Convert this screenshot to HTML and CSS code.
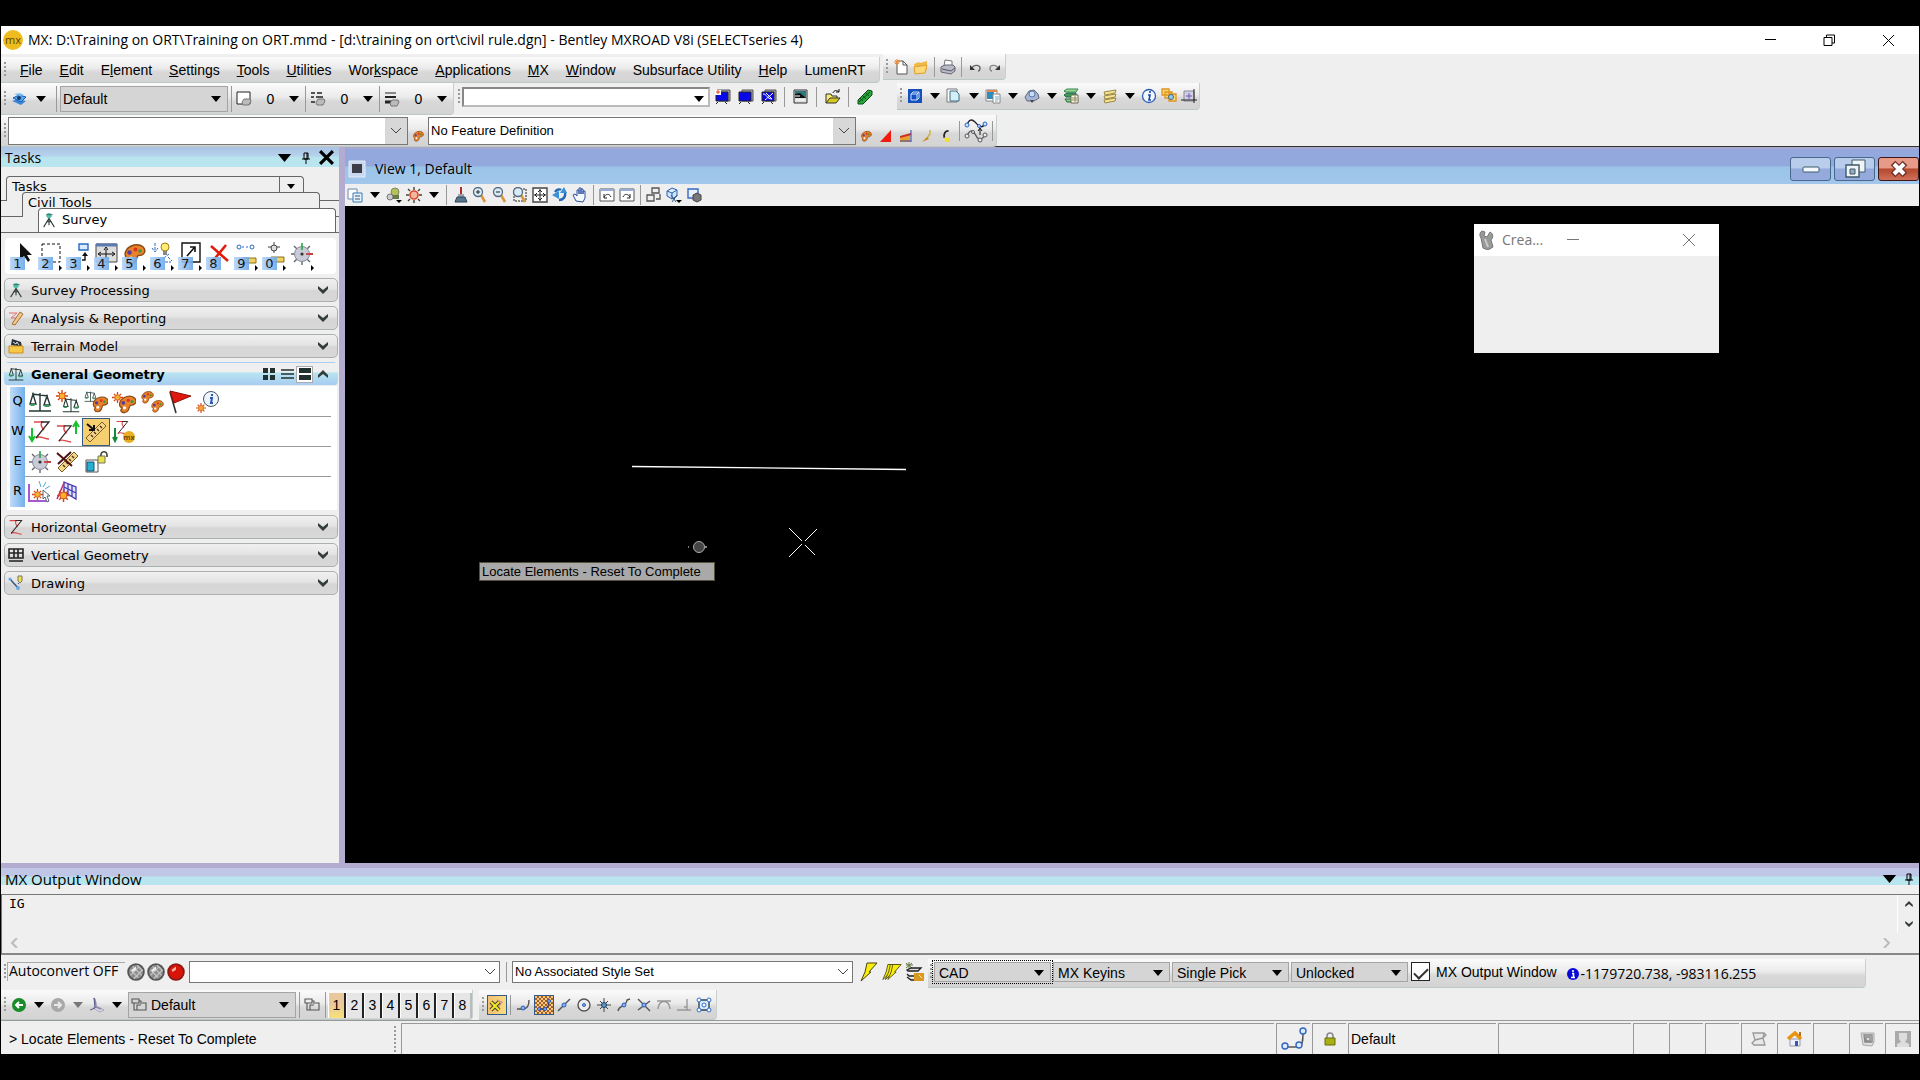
FILE: index.html
```html
<!doctype html>
<html lang="en">
    <head>
        <title>Bentley MXROAD V8i</title>
        <meta charset="UTF-8">
        <meta name="viewport" content="width=device-width, initial-scale=1">
        <link rel="stylesheet" href="styles.css">
    </head>
    <body>

    <!-- shared icons -->
    <svg class="sprite">
        <symbol id="caret" viewBox="0 0 10 6"><path d="M0 0h10L5 6z" fill="currentColor"/></symbol>
        <symbol id="chevron" viewBox="0 0 10 8"><path d="M0 0l5 4 5-4v3L5 8 0 3z" fill="currentColor"/></symbol>
        <symbol id="pin" viewBox="0 0 8 12"><path d="M2 1h4v6H2zM0 7h8M4 7v5M5 1v6" fill="none" stroke="#000"/></symbol>
        <symbol id="palette" viewBox="0 0 16 16"><path d="M8 2c5-1 8 2 7 5-1 2-3 2-4 2s-1 2-2 4-5 3-6 0l1-2C1 10 1 4 8 2z" fill="#e8822a" stroke="#8a4a16"/><circle cx="5" cy="7" r="1.5" fill="#5a3a9a"/><circle cx="9" cy="5" r="1.3" fill="#e03020"/><circle cx="12" cy="6" r="1.2" fill="#3a9a3a"/><circle cx="6" cy="11" r="1.3" fill="#fff"/></symbol>
        <symbol id="scale" viewBox="0 0 24 24"><path d="M1 21h22M12 3v18M4 4l16 2M5 4L2 14h6zM19 6l-3 9h6z" fill="none" stroke="#243a36" stroke-width="1.4"/><path d="M1 14h7l-2 2H3zM15 15h8l-2 2h-4z" fill="#3e9a5c"/></symbol>
        <symbol id="sun" viewBox="0 0 12 12"><path d="M6 0v12M0 6h12M2 2l8 8M10 2l-8 8" stroke="#d04818" stroke-width="1.4"/><circle cx="6" cy="6" r="3" fill="#f8b030" stroke="#e06020"/></symbol>
        <symbol id="zig" viewBox="0 0 18 20"><path d="M1 2h8c-2 4 0 5 2 8M3 18c4-3 8 1 13 1" stroke="#e04848" fill="none" stroke-width="1.5"/><path d="M8 2h8L3 18" fill="none" stroke="#3a2828" stroke-width="1.3"/></symbol>
        <symbol id="ruler" viewBox="0 0 24 24"><path d="M2 18L18 2l4 4L6 22z" fill="#f2d888" stroke="#7a5a1c"/><path d="M7 15l2 2M10 12l2 2M13 9l2 2M16 6l2 2" stroke="#5a2a1a" stroke-width="1.4"/></symbol>
        <symbol id="compass" viewBox="0 0 24 24"><path d="M4 4l16 16M20 4L4 20M1 12h22M12 12v11" stroke="#666" stroke-width="1.4"/><circle cx="12" cy="12" r="7.5" fill="#c9cbd6" stroke="#888ca0"/><path d="M12 1v7" stroke="#2aa84a" stroke-width="1.6"/><path d="M16 12h7" stroke="#c83030" stroke-width="1.6"/><circle cx="12" cy="12" r="1.6" fill="#333"/></symbol>
        <symbol id="tripod" viewBox="0 0 16 18"><circle cx="8" cy="4" r="3" fill="#4cc0a8"/><path d="M5 3h7" stroke="#466"/><path d="M8 7L2 17M8 7l6 10M8 7v8M5 11h6" fill="none" stroke="#2c3a3a" stroke-width="1.2"/></symbol>
        <symbol id="models" viewBox="0 0 16 16"><path d="M1 2h7v4H1zM3 6v7h3M8 4h2v3M11 6h4v7H6V8h4" fill="none" stroke="#555" stroke-width="1.1"/></symbol>
        <symbol id="layers" viewBox="0 0 16 16"><path d="M1 10l6-2 8 2-5 4z" fill="#3a86d8"/><path d="M2 7l6-3 7 2-5 5z" fill="#5aa8ec" stroke="#1a5cb8"/><path d="M3 3l6-1 4 2-4 1z" fill="#78c0f4"/><circle cx="8" cy="7" r="2" fill="#123a6a"/></symbol>
        <symbol id="ball" viewBox="0 0 16 16"><circle cx="8" cy="8" r="7" fill="#8c8c8c" stroke="#555" stroke-width="1.6"/><path d="M3 6l7 7M5 3l8 8M9 2l5 5M3 11L11 3M6 14l8-8" stroke="#c6c6c6"/><path d="M4 6l4-3v3l-3 2z" fill="#eee"/></symbol>
        <symbol id="monitor" viewBox="0 0 16 16"><path d="M4 1h11v11H4z" fill="#aaa" stroke="#555"/><path d="M1 3h12v9H1z" fill="#0808e8" stroke="#222"/><path d="M1 15l2-2M12 15l-2-2" stroke="#222" fill="none"/></symbol>
        <symbol id="lens" viewBox="0 0 16 16"><path d="M9 8l4 7" stroke="#d89840" stroke-width="2.6"/><circle cx="6" cy="5" r="4.5" fill="#d8ecf8" stroke="#556a80" stroke-width="1.3"/></symbol>
        <symbol id="pageview" viewBox="0 0 16 14"><path d="M1 1h14v12H1z" fill="#fff" stroke="#555"/><path d="M1 2h14" stroke="#98b0d8" stroke-width="2"/></symbol>
        <symbol id="bolt" viewBox="0 0 18 20"><path d="M7 1h10L9 10l2 0L1 19 5 10z" fill="#f8ec10" stroke="#4a4408"/></symbol>
    </svg>

    <div class="app">

        <header class="titlebar">
            <svg class="logo" viewBox="0 0 22 22"><circle cx="11" cy="11" r="10" fill="#eebc1c"/><text x="11" y="15" text-anchor="middle" class="logo-text">mx</text></svg>
            <h1>MX: D:\Training on ORT\Training on ORT.mmd - [d:\training on ort\civil rule.dgn] - Bentley MXROAD V8i (SELECTseries 4)</h1>
            <div class="winbuttons">
                <button type="button" aria-label="Minimize"><svg viewBox="0 0 12 12"><path d="M1 5.5h11" stroke="#000"/></svg></button>
                <button type="button" aria-label="Restore"><svg viewBox="0 0 12 12"><path d="M1 3.5h8v8H1zM3.5 3V1h8v8H9" fill="none" stroke="#000"/></svg></button>
                <button type="button" aria-label="Close"><svg viewBox="0 0 12 12"><path d="M1 1l11 11M12 1L1 12" stroke="#000"/></svg></button>
            </div>
        </header>

        <div class="row menu-row">
            <nav class="bar menu">
                <i class="grip"></i>
                <a href="#"><u>F</u>ile</a>
                <a href="#"><u>E</u>dit</a>
                <a href="#">E<u>l</u>ement</a>
                <a href="#"><u>S</u>ettings</a>
                <a href="#"><u>T</u>ools</a>
                <a href="#"><u>U</u>tilities</a>
                <a href="#">Wor<u>k</u>space</a>
                <a href="#"><u>A</u>pplications</a>
                <a href="#"><u>M</u>X</a>
                <a href="#"><u>W</u>indow</a>
                <a href="#">Subsurface Utility</a>
                <a href="#"><u>H</u>elp</a>
                <a href="#">LumenRT</a>
            </nav>
            <div class="bar filebar">
                <i class="grip"></i>
                <button class="tool" type="button" aria-label="New"><svg viewBox="0 0 16 16"><path d="M4 2h6l4 4v9H4z" fill="#fff" stroke="#555"/><path d="M10 2v4h4" fill="none" stroke="#555"/><path d="M4 0v6M1 3h6M2 1l4 4M6 1L2 5" stroke="#f08a30"/></svg></button>
                <button class="tool" type="button" aria-label="Open"><svg viewBox="0 0 16 16"><path d="M1 5l5-2 1 1 7-2v9L2 15z" fill="#f2b848"/><path d="M1 8l13-2-2 8-10 1z" fill="#fbd878" stroke="#e0a030"/></svg></button>
                <i class="sep"></i>
                <button class="tool" type="button" aria-label="Print"><svg viewBox="0 0 16 16"><path d="M5 1l7 1v5H4z" fill="#fff" stroke="#777"/><path d="M1 8l4-2h8l2 2v4l-4 3-10-2z" fill="#b9bcc6" stroke="#667"/><path d="M2 10l9 2 4-3" fill="none" stroke="#556"/></svg></button>
                <i class="sep"></i>
                <button class="tool" type="button" aria-label="Undo"><svg viewBox="0 0 16 16"><path d="M5 9c2-4 8-3 8 0 0 2-1 3-2 3" fill="none" stroke="#666" stroke-width="1.4"/><path d="M3 6v5h5z" fill="#333"/></svg></button>
                <button class="tool" type="button" aria-label="Redo"><svg viewBox="0 0 16 16"><path d="M11 9C9 5 3 6 3 9c0 2 1 3 2 3" fill="none" stroke="#888" stroke-width="1.4"/><path d="M13 6v5H8z" fill="#333"/></svg></button>
            </div>
        </div>

        <div class="row tools-row">
            <div class="bar attributes">
                <i class="grip"></i>
                <button class="tool" type="button" aria-label="Template"><svg><use href="#layers"/></svg></button>
                <button class="drop wide" type="button" aria-label="Template list"><svg><use href="#caret"/></svg></button>
                <i class="sep"></i>
                <span class="select level"><select aria-label="Level"><option>Default</option></select><svg><use href="#caret"/></svg></span>
                <i class="sep"></i>
                <button class="attr" type="button"><svg class="ico" viewBox="0 0 16 16"><path d="M1 1h13v12H1z" fill="#fff" stroke="#222"/><path d="M6 11l2-3h6l1 2-2 4H7z" fill="#bbb" stroke="#777"/></svg><span>0</span><svg class="arrow"><use href="#caret"/></svg></button>
                <i class="sep"></i>
                <button class="attr" type="button"><svg class="ico" viewBox="0 0 16 16"><path d="M1 2h4M7 2h5M1 6h3M6 6h7M1 11h4" stroke="#222" stroke-width="1.4"/><path d="M6 12l2-4h6l1 2-2 4H7z" fill="#bbb" stroke="#777"/></svg><span>0</span><svg class="arrow"><use href="#caret"/></svg></button>
                <i class="sep"></i>
                <button class="attr" type="button"><svg class="ico" viewBox="0 0 16 16"><path d="M1 2h11" stroke="#222"/><path d="M1 6h11" stroke="#222" stroke-width="2"/><path d="M1 11h8" stroke="#222" stroke-width="3"/><path d="M6 12l2-3h6l1 2-2 4H7z" fill="#bbb" stroke="#777"/></svg><span>0</span><svg class="arrow"><use href="#caret"/></svg></button>
            </div>
            <div class="keyin">
                <i class="grip"></i>
                <span class="select keyin-box"><select aria-label="Key-in"><option></option></select><svg><use href="#caret"/></svg></span>
                <button class="tool mid" type="button" aria-label="Display set"><svg viewBox="0 0 16 16"><use href="#monitor"/><path d="M0 1h6v5H0z" fill="#fff"/><path d="M3 0v5M1 3h4" stroke="#e04020"/></svg></button>
                <button class="tool mid" type="button" aria-label="Display"><svg viewBox="0 0 16 16"><use href="#monitor"/></svg></button>
                <button class="tool mid" type="button" aria-label="Display wireframe"><svg viewBox="0 0 16 16"><use href="#monitor"/><path d="M2 5c4 0 4 5 9 5M4 11c2-2 5-4 8-7M5 4l6 6" stroke="#fff" fill="none"/></svg></button>
                <i class="sep"></i>
                <button class="tool mid" type="button" aria-label="Image"><svg viewBox="0 0 16 16"><path d="M1 1h13v13H1z" fill="#ddd" stroke="#333"/><path d="M2 2h11v7H2z" fill="#2c7a80"/><path d="M2 5l5-1 6 5H2z" fill="#111"/><path d="M2 7h5M3 11h9" stroke="#fff"/></svg></button>
                <i class="sep"></i>
                <button class="tool mid" type="button" aria-label="Open project"><svg viewBox="0 0 16 16"><path d="M1 14V5h5l1 2h5v2" fill="#f6ec70" stroke="#333"/><path d="M1 14l4-5h10l-4 5z" fill="#d8c820" stroke="#333"/><path d="M8 4c1-3 4-3 6-1M14 0v3h-3" fill="none" stroke="#111"/></svg></button>
                <i class="sep"></i>
                <button class="tool mid" type="button" aria-label="Road"><svg viewBox="0 0 16 16"><path d="M1 11L11 1l4 1v4L6 15H1z" fill="#28a83c" stroke="#0c4a18"/><path d="M3 9l3 3M6 7l3 3M9 4l3 3M2 13L13 3" stroke="#0c4a18"/></svg></button>
            </div>
            <div class="bar primary">
                <i class="grip"></i>
                <button class="tool" type="button" aria-label="Models"><svg viewBox="0 0 16 16"><path d="M1 1h14v14H1z" fill="#1450c0"/><path d="M4 6h6v6H4zM4 6l2-2h6v6l-2 2M10 6l2-2" fill="none" stroke="#cfe4ff"/></svg></button>
                <button class="drop" type="button" aria-label="More models"><svg><use href="#caret"/></svg></button>
                <button class="tool" type="button" aria-label="References"><svg viewBox="0 0 16 16"><path d="M1 1h10v13H1z" fill="#fff" stroke="#777"/><path d="M4 3h6l3 3v7H4z" fill="#d4f0f6" stroke="#3a6a86"/></svg></button>
                <button class="drop" type="button" aria-label="More references"><svg><use href="#caret"/></svg></button>
                <button class="tool" type="button" aria-label="Raster manager"><svg viewBox="0 0 16 16"><path d="M1 2h11v11H1z" fill="#fff" stroke="#888"/><path d="M2 4h7v7H2z" fill="#2c8cc0"/><path d="M2 3h10" stroke="#e08850" stroke-width="2"/><path d="M8 6h7v9H8z" fill="#fff" stroke="#888"/><path d="M10 9h4M10 11h4M10 13h3" stroke="#7ab"/></svg></button>
                <button class="drop" type="button" aria-label="More raster"><svg><use href="#caret"/></svg></button>
                <button class="tool" type="button" aria-label="Point clouds"><svg viewBox="0 0 16 16"><path d="M1 9l4-6 5-1 4 4 1 4-5 3H3z" fill="#a8b4d4" stroke="#667"/><circle cx="8" cy="6" r="3" fill="#c8dcf4" stroke="#57a"/><path d="M6 12h4l-2 3z" fill="#445"/></svg></button>
                <button class="drop" type="button" aria-label="More point clouds"><svg><use href="#caret"/></svg></button>
                <button class="tool" type="button" aria-label="Level manager"><svg viewBox="0 0 16 16"><path d="M1 3l3-2h11l-2 3H2z" fill="#9ad890" stroke="#385"/><path d="M1 7l3-2h9v4H3z" fill="#3a9a58" stroke="#264"/><path d="M2 11h8v3H4z" fill="#8cd080" stroke="#264"/><path d="M8 7h7v8H8z" fill="#fff8e0" stroke="#665"/><path d="M9 10h5M9 12h5M12 8v6" stroke="#886"/></svg></button>
                <button class="drop" type="button" aria-label="More levels"><svg><use href="#caret"/></svg></button>
                <button class="tool" type="button" aria-label="Level display"><svg viewBox="0 0 16 16"><path d="M2 4l12-2-1 3-10 2zM2 8l12-2-1 3-10 2zM2 12l12-2-1 3-10 2z" fill="#f6e490" stroke="#998848"/></svg></button>
                <button class="drop" type="button" aria-label="More level display"><svg><use href="#caret"/></svg></button>
                <button class="tool" type="button" aria-label="Element information"><svg viewBox="0 0 16 16"><circle cx="8" cy="8" r="6.5" fill="#f4f8ff" stroke="#2c5cb8" stroke-width="1.3"/><path d="M9 3v2M7 7h2l-1 5h2" fill="none" stroke="#1a48a8" stroke-width="1.6"/></svg></button>
                <button class="tool" type="button" aria-label="Project explorer"><svg viewBox="0 0 16 16"><path d="M1 1h7v6H1zM4 4h7v6H4zM8 6h7v7H8z" fill="#fcd870" stroke="#e09420" stroke-width="1.3"/><circle cx="10" cy="9" r="2.5" fill="#8cd0f0" stroke="#468"/></svg></button>
                <button class="tool" type="button" aria-label="AccuDraw"><svg viewBox="0 0 16 16"><path d="M3 3h10v10H3z" fill="#d0d0e4" stroke="#889"/><path d="M0 12h16" stroke="#222"/><path d="M13 1v14" stroke="#222"/><path d="M8 5v6M5 8h6" stroke="#7a50b0"/></svg></button>
            </div>
        </div>

        <div class="row feature-row">
            <div class="bar feature">
                <i class="grip"></i>
                <span class="select combo long"><select aria-label="Feature"><option></option></select><svg viewBox="0 0 10 6"><path d="M0 0l5 5 5-5" fill="none" stroke="#444"/></svg></span>
                <button class="tool low" type="button" aria-label="Feature palette"><svg><use href="#palette"/></svg></button>
                <span class="select combo longer"><select aria-label="Feature definition"><option>No Feature Definition</option></select><svg viewBox="0 0 10 6"><path d="M0 0l5 5 5-5" fill="none" stroke="#444"/></svg></span>
                <button class="tool low" type="button" aria-label="Definition palette"><svg><use href="#palette"/></svg></button>
                <button class="tool low" type="button" aria-label="Slope"><svg viewBox="0 0 12 12"><path d="M0 12L11 0v12z" fill="#f01c10"/></svg></button>
                <button class="tool low" type="button" aria-label="Profile"><svg viewBox="0 0 12 12"><path d="M0 8l10-4v8H0z" fill="#e8a030"/><path d="M0 7l11-3" stroke="#d03020" stroke-width="2"/><path d="M11 0v12M0 11h11" stroke="#3048a8"/></svg></button>
                <button class="tool low" type="button" aria-label="Brush"><svg viewBox="0 0 12 12"><path d="M10 0v4L7 8" fill="none" stroke="#c8b040" stroke-width="1.4"/><path d="M7 7l2 2-7 3z" fill="#c88a1c"/></svg></button>
                <button class="tool low" type="button" aria-label="Curve"><svg viewBox="0 0 12 14"><path d="M9 1C5 1 3 4 4 9" fill="none" stroke="#222" stroke-width="2"/><path d="M4 9h6v5H5z" fill="#f0e030"/></svg></button>
                <i class="sep"></i>
                <button class="tool big" type="button" aria-label="Splines"><svg viewBox="0 0 24 24"><path d="M3 6C5 0 8 0 11 3s6 8 10 2" fill="none" stroke="#223" stroke-width="1.4"/><path d="M3 17c3-7 6-6 8-2s5 9 10 1" fill="none" stroke="#556" stroke-width="1.4"/><path d="M16 10v6M14 12l2-3 2 3" stroke="#111" fill="none"/><g fill="#cfe2ff" stroke="#2c62c0"><circle cx="3" cy="6" r="2"/><circle cx="15" cy="7" r="1.5"/><circle cx="21" cy="5" r="2"/></g><g fill="#eee" stroke="#555"><circle cx="3" cy="17" r="2"/><circle cx="9" cy="13" r="1.5"/><circle cx="16" cy="21" r="2"/><circle cx="21" cy="16" r="2"/></g></svg></button>
                <i class="sep"></i>
            </div>
        </div>

        <main class="main">

            <aside class="tasks">
                <div class="dock-head">
                    <h2>Tasks</h2>
                    <button type="button" aria-label="Panel menu"><svg class="menu-caret"><use href="#caret"/></svg></button>
                    <button type="button" aria-label="Pin"><svg class="pin"><use href="#pin"/></svg></button>
                    <button type="button" aria-label="Close panel"><svg class="close" viewBox="0 0 14 14"><path d="M1 1l12 12M13 1L1 13" stroke="#000" stroke-width="3"/></svg></button>
                </div>

                <div class="tab-row"><a class="tab first" href="#">Tasks<span><svg><use href="#caret"/></svg></span></a></div>
                <div class="tab-row"><a class="tab second" href="#">Civil Tools</a></div>
                <div class="tab-row"><a class="tab third" href="#"><svg><use href="#tripod"/></svg>Survey</a></div>

                <div class="main-tasks">
                    <button type="button"><svg viewBox="0 0 24 24"><path d="M10 1v17l4-4 4 6 2-2-3-5h5z" fill="#111"/></svg><b>1</b></button>
                    <button class="more" type="button"><svg viewBox="0 0 24 24"><path d="M4 2h18v18H4z" fill="none" stroke="#111" stroke-dasharray="3 2"/></svg><b>2</b></button>
                    <button class="more" type="button"><svg viewBox="0 0 24 24"><path d="M13 2h9v6h-9z" fill="#d8ecff" stroke="#2a6ac0" stroke-width="1.4"/><path d="M16 18h3v-5" fill="none" stroke="#111" stroke-width="1.4"/><path d="M16 14l3-4 3 4z" fill="#111"/></svg><b>3</b></button>
                    <button class="more" type="button"><svg viewBox="0 0 24 24"><path d="M2 2h21v18H2z" fill="#ddd" stroke="#444"/><path d="M2 3h21" stroke="#5a7ab0" stroke-width="3"/><path d="M12 7v10M5 12h15M10 8l2-3 2 3M7 10l-3 2 3 2M18 10l3 2-3 2" fill="none" stroke="#111"/></svg><b>4</b></button>
                    <button class="more" type="button"><svg viewBox="0 0 16 16"><use href="#palette"/></svg><b>5</b></button>
                    <button class="more" type="button"><svg viewBox="0 0 24 24"><path d="M5 1v8M2 6l3 4 3-4M14 16l5-4M15 20h6M18 15l4 4" fill="none" stroke="#2a6ac0" stroke-dasharray="3 1"/><circle cx="15" cy="5" r="4" fill="#ffec70" stroke="#a08020"/><path d="M13 9h4v4h-4z" fill="#888"/></svg><b>6</b></button>
                    <button class="more" type="button"><svg viewBox="0 0 24 24"><path d="M4 1h18v19H4z" fill="#fff" stroke="#111" stroke-width="1.4"/><path d="M9 14l7-8M12 5h5v5" fill="none" stroke="#111" stroke-width="1.6"/></svg><b>7</b></button>
                    <button type="button"><svg viewBox="0 0 24 24"><path d="M5 4l17 15M20 3L6 20" stroke="#e01c10" stroke-width="2.6"/></svg><b>8</b></button>
                    <button class="more" type="button"><svg viewBox="0 0 24 24"><path d="M4 5h14" stroke="#2a6ac0" stroke-dasharray="2 2"/><circle cx="5" cy="5" r="2" fill="#fff" stroke="#2a6ac0"/><circle cx="18" cy="5" r="2" fill="#fff" stroke="#2a6ac0"/><path d="M9 16h13v5H9z" fill="#f0d060" stroke="#887020"/></svg><b>9</b></button>
                    <button class="more" type="button"><svg viewBox="0 0 24 24"><path d="M12 0v11M6 5h12" stroke="#444"/><circle cx="12" cy="6" r="3" fill="#ddd" stroke="#444"/><path d="M9 15h13v5H9z" fill="#f0d060" stroke="#887020"/></svg><b>0</b></button>
                    <button class="more" type="button" aria-label="Compass"><svg><use href="#compass"/></svg></button>
                </div>

                <div class="sections">
                    <button class="section" type="button"><svg><use href="#tripod"/></svg><span>Survey Processing</span><svg class="chev"><use href="#chevron"/></svg></button>
                    <button class="section" type="button"><svg viewBox="0 0 16 16"><path d="M1 3h8l-6 5h8L6 15" fill="none" stroke="#e07068"/><path d="M4 14L12 2l3 2L7 15z" fill="#f4c88c" stroke="#a07038"/></svg><span>Analysis &amp; Reporting</span><svg class="chev"><use href="#chevron"/></svg></button>
                    <button class="section" type="button"><svg viewBox="0 0 16 16"><path d="M3 7l1-6 9 3 1 5z" fill="#26303a"/><path d="M5 4l3 2 1-2 2 3" stroke="#ddd" fill="none"/><path d="M1 8h14v7H1z" fill="#f8c848" stroke="#c89020"/></svg><span>Terrain Model</span><svg class="chev"><use href="#chevron"/></svg></button>

                    <div class="section open">
                        <svg viewBox="0 0 24 24"><use href="#scale"/></svg><span>General Geometry</span>
                        <button type="button" aria-label="Icons"><svg viewBox="0 0 14 14"><path d="M1 1h5v5H1zM8 1h5v5H8zM1 8h5v5H1zM8 8h5v5H8z" fill="#22302e"/></svg></button>
                        <button type="button" aria-label="List"><svg viewBox="0 0 14 14"><path d="M1 3h13M1 7h13M1 11h13" stroke="#22302e" stroke-width="1.6"/></svg></button>
                        <button class="on" type="button" aria-label="Panel"><svg viewBox="0 0 14 14"><path d="M1 1h12v5H1zM1 8h12v5H1z" fill="#22302e"/></svg></button>
                        <svg class="chev up"><use href="#chevron"/></svg>
                    </div>

                    <div class="toolgrid">
                        <div class="toolline"><kbd>Q</kbd>
                            <button type="button" aria-label="Reports"><svg><use href="#scale"/></svg></button>
                            <button type="button" aria-label="Set feature"><svg viewBox="0 0 24 24"><use href="#sun" width="12" height="12"/><use href="#scale" x="6" y="6" width="18" height="18"/></svg></button>
                            <button type="button" aria-label="Match feature"><svg viewBox="0 0 24 24"><use href="#scale" width="13" height="13"/><use href="#palette" x="7" y="5" width="18" height="18"/></svg></button>
                            <button type="button" aria-label="Set active"><svg viewBox="0 0 24 24"><use href="#palette" x="5" y="4" width="20" height="20"/><use href="#sun" y="2" width="11" height="11"/></svg></button>
                            <button type="button" aria-label="Copy feature"><svg viewBox="0 0 24 24"><use href="#palette" width="14" height="14"/><use href="#palette" x="10" y="9" width="14" height="14"/></svg></button>
                            <button type="button" aria-label="Flag"><svg viewBox="0 0 24 24"><path d="M2 2l6 21" stroke="#333" stroke-width="1.6"/><path d="M2 1l21 5-17 7z" fill="#e01810" stroke="#8c1008"/></svg></button>
                            <button type="button" aria-label="Feature info"><svg viewBox="0 0 24 24"><circle cx="15" cy="9" r="7.5" fill="#eef4ff" stroke="#456"/><path d="M16 4v2M14 8h2l-1 5h2" fill="none" stroke="#2a58b0" stroke-width="2"/><use href="#sun" y="13" width="10" height="10"/></svg></button>
                        </div>
                        <div class="toolline"><kbd>W</kbd>
                            <button type="button" aria-label="Import geometry"><svg viewBox="0 0 24 24"><use href="#zig" x="5" width="18" height="20"/><path d="M4 8v12M1 16l3 5 3-5" fill="none" stroke="#18c030" stroke-width="2"/></svg></button>
                            <button type="button" aria-label="Export geometry"><svg viewBox="0 0 24 24"><use href="#zig" y="4" width="17" height="19"/><path d="M20 14V3M17 7l3-5 3 5" fill="none" stroke="#18c030" stroke-width="2"/></svg></button>
                            <button class="on" type="button" aria-label="Active rules"><svg viewBox="0 0 24 24"><use href="#ruler"/><path d="M3 4l6 5M5 10h5V5" fill="none" stroke="#111" stroke-width="2"/></svg></button>
                            <button type="button" aria-label="Import MX"><svg viewBox="0 0 24 24"><use href="#zig" x="3" width="15" height="15"/><path d="M3 8v12M1 17l2 4 2-4" fill="none" stroke="#188838" stroke-width="2"/><circle cx="17" cy="17" r="6" fill="#e8b020"/><text x="17" y="20" text-anchor="middle" class="mini">mx</text></svg></button>
                        </div>
                        <div class="toolline"><kbd>E</kbd>
                            <button type="button" aria-label="Civil AccuDraw"><svg><use href="#compass"/></svg></button>
                            <button type="button" aria-label="Deactivate rule"><svg viewBox="0 0 24 24"><use href="#ruler"/><path d="M1 3l15 13M15 2L2 14" stroke="#501010" stroke-width="2"/></svg></button>
                            <button type="button" aria-label="Unlock"><svg viewBox="0 0 24 24"><path d="M2 10h12v12H2z" fill="#fff" stroke="#555"/><path d="M3 12h7v9H3z" fill="#28b0d0" stroke="#157"/><path d="M14 6h7v7h-7z" fill="#e8e048" stroke="#776"/><path d="M17 6c-1-5 6-6 6-1v2" fill="none" stroke="#443" stroke-width="1.6"/></svg></button>
                        </div>
                        <div class="toolline"><kbd>R</kbd>
                            <button type="button" aria-label="Create template"><svg viewBox="0 0 24 24"><path d="M1 4v17h20" fill="none" stroke="#a858d0" stroke-width="2"/><use href="#sun" x="4" y="9" width="11" height="11"/><path d="M11 1l2 6M18 2l-3 5M22 6l-5 3" stroke="#58a8e0"/><path d="M15 10v9l2-2 2 5 2-1-2-5h3z" fill="#fff" stroke="#567"/></svg></button>
                            <button type="button" aria-label="Grid"><svg viewBox="0 0 24 24"><path d="M8 2l12 5v12L8 12zM12 4v11M16 5v12M8 7l12 6" fill="#dce4ff" stroke="#4838b0" stroke-width="1.3"/><path d="M1 19L8 3" stroke="#c02878" stroke-width="1.6"/><use href="#sun" x="1" y="9" width="13" height="13"/></svg></button>
                        </div>
                    </div>

                    <button class="section" type="button"><svg viewBox="0 0 18 20"><use href="#zig"/></svg><span>Horizontal Geometry</span><svg class="chev"><use href="#chevron"/></svg></button>
                    <button class="section" type="button"><svg viewBox="0 0 16 16"><path d="M1 2h14v9H1zM1 6h14M6 2v9M10 2v9M1 14h14" fill="none" stroke="#222" stroke-width="1.6"/></svg><span>Vertical Geometry</span><svg class="chev"><use href="#chevron"/></svg></button>
                    <button class="section" type="button"><svg viewBox="0 0 16 16"><path d="M2 4l8 9" stroke="#357" stroke-width="1.4"/><circle cx="2" cy="4" r="1.6" fill="#6ae"/><circle cx="10" cy="13" r="2" fill="#6ae"/><path d="M10 9l3-3" stroke="#357"/><path d="M10 1h4v5l-2 2-2-2z" fill="#f0e048" stroke="#776"/></svg><span>Drawing</span><svg class="chev"><use href="#chevron"/></svg></button>
                </div>
            </aside>

            <section class="view">
                <div class="view-head">
                    <svg class="view-icon" viewBox="0 0 18 18"><path d="M1 1h16v16H1z" fill="#c8d8f0" stroke="#e4ecf8"/><path d="M4 4h10v9H4z" fill="#3c3c48"/></svg>
                    <h2>View 1, Default</h2>
                    <button type="button" aria-label="Minimize view"><svg viewBox="0 0 24 20"><rect x="4" y="8" width="16" height="5" rx="1" fill="#f4f8ff" stroke="#3c5a68"/></svg></button>
                    <button type="button" aria-label="Restore view"><svg viewBox="0 0 24 20"><path d="M9 1h13v12H9z" fill="#f0f4f8" stroke="#3c5a68"/><path d="M3 6h13v12H3z" fill="#f0f4f8" stroke="#3c5a68" stroke-width="1.4"/><path d="M7 10h5v5H7z" fill="#9ab" stroke="#3c5a68"/></svg></button>
                    <button class="view-close" type="button" aria-label="Close view"><svg viewBox="0 0 24 20"><path d="M6 4l12 12M18 4L6 16" stroke="#70302a" stroke-width="6.5"/><path d="M7 5l10 10M17 5L7 15" stroke="#fff" stroke-width="4"/></svg></button>
                </div>
                <div class="view-tools">
                    <button class="tool" type="button" aria-label="View attributes"><svg viewBox="0 0 16 16"><path d="M1 2h9v10H1z" fill="#fff" stroke="#68a"/><path d="M6 6h9v9H6z" fill="#e8f2ff" stroke="#357ab8"/><path d="M8 9h5M8 12h5" stroke="#357"/></svg></button>
                    <button class="drop" type="button" aria-label="More attributes"><svg><use href="#caret"/></svg></button>
                    <button class="tool" type="button" aria-label="Display style"><svg viewBox="0 0 16 16"><circle cx="9" cy="5" r="4" fill="#b8c058" stroke="#786"/><circle cx="4" cy="10" r="3" fill="#ccc" stroke="#777"/><path d="M7 8h6v4H7z" fill="#687848"/><path d="M10 13h6l-3 3z" fill="#000"/></svg></button>
                    <button class="tool" type="button" aria-label="Brightness"><svg viewBox="0 0 16 16"><path d="M8 0v3M8 13v3M0 8h3M13 8h3M2 2l2 2M14 2l-2 2M2 14l2-2M14 14l-2-2" stroke="#443" stroke-width="1.4"/><circle cx="8" cy="8" r="4" fill="#f0b8a0" stroke="#e04828" stroke-width="1.6"/></svg></button>
                    <button class="drop" type="button" aria-label="More brightness"><svg><use href="#caret"/></svg></button>
                    <i class="sep"></i>
                    <button class="tool" type="button" aria-label="Update view"><svg viewBox="0 0 16 16"><path d="M9 0v7" stroke="#b03028" stroke-width="2"/><path d="M6 7h6v3H6z" fill="#9aa4b0"/><path d="M5 10h8l2 5H3z" fill="#567890" stroke="#345"/></svg></button>
                    <button class="tool" type="button" aria-label="Zoom in"><svg viewBox="0 0 16 16"><use href="#lens"/><path d="M4 5h4M6 3v4" stroke="#222"/></svg></button>
                    <button class="tool" type="button" aria-label="Zoom out"><svg viewBox="0 0 16 16"><use href="#lens"/><path d="M4 5h4" stroke="#222"/></svg></button>
                    <button class="tool" type="button" aria-label="Window area"><svg viewBox="0 0 16 16"><path d="M2 2h12v12H2z" fill="none" stroke="#222" stroke-dasharray="2 1"/><use href="#lens"/></svg></button>
                    <button class="tool" type="button" aria-label="Fit view"><svg viewBox="0 0 16 16"><path d="M1 1h14v14H1z" fill="#fff" stroke="#444" stroke-width="1.4"/><path d="M8 2v12M2 8h12M6 5l2-2 2 2M6 11l2 2 2-2M5 6L3 8l2 2M11 6l2 2-2 2" fill="none" stroke="#222"/></svg></button>
                    <button class="tool" type="button" aria-label="Rotate view"><svg viewBox="0 0 16 16"><path d="M3 5c2-3 5-3 6-2M13 5c1 5-2 8-6 8" fill="none" stroke="#2468b8" stroke-width="2.4"/><path d="M0 8l7-4v8zM8 6l4-6 3 6z" fill="#3a90d8"/></svg></button>
                    <button class="tool" type="button" aria-label="Pan view"><svg viewBox="0 0 16 16"><path d="M4 14L1 8l2-1 2 2V3h2v4-6h2v6-5h2v5-3h2v7l-2 4z" fill="#f4f8ff" stroke="#2c50a0"/></svg></button>
                    <i class="sep"></i>
                    <button class="tool" type="button" aria-label="View previous"><svg viewBox="0 0 16 14"><use href="#pageview"/><path d="M12 9C10 5 7 6 5 9M5 6v4h3" fill="none" stroke="#222"/></svg></button>
                    <button class="tool" type="button" aria-label="View next"><svg viewBox="0 0 16 14"><use href="#pageview"/><path d="M4 9c2-4 5-3 7 0M11 6v4H8" fill="none" stroke="#222"/></svg></button>
                    <i class="sep"></i>
                    <button class="tool" type="button" aria-label="Copy view"><svg viewBox="0 0 16 16"><path d="M6 1h7v5H6zM1 8h7v6H1zM14 7v5h-4" fill="none" stroke="#555" stroke-width="1.3"/></svg></button>
                    <button class="tool" type="button" aria-label="Clip volume"><svg viewBox="0 0 16 16"><path d="M1 4l5-3 5 2v6l-5 3-5-3zM1 4l5 2 5-3M6 6v6" fill="#cfe4ff" stroke="#2c62b0"/><path d="M5 8l5 7M11 8l-5 7" stroke="#357"/><path d="M10 13h6l-3 3z" fill="#000"/></svg></button>
                    <button class="tool" type="button" aria-label="Clip mask"><svg viewBox="0 0 16 16"><path d="M2 2h10v9H2z" fill="#e8f2ff" stroke="#3868c0" stroke-width="1.4"/><path d="M7 8l4-2 4 2v5l-4 2-4-2z" fill="#777" stroke="#444"/></svg></button>
                </div>
                <div class="canvas">
                    <svg class="drawing" stroke="#fff" fill="none">
                        <path d="M287 260.500l274 3" stroke-width="1.3"/>
                        <path d="M444 322l13 13M460 339l10 10M472 323l-12 12M457 338l-13 13" shape-rendering="crispEdges"/>
                        <path d="M343 341h1M360 341h2"/>
                        <circle cx="354" cy="341" r="5.5" fill="#444" stroke="#aaa"/>
                    </svg>
                    <div class="prompt">Locate Elements - Reset To Complete</div>
                    <div class="dialog">
                        <div class="dialog-head">
                            <svg class="wrench" viewBox="0 0 16 20"><path d="M3 1l3 1-1 4 3 1 3-5c4 2 3 6 1 8l2 7-5 3-5-2L2 8C0 5 1 2 3 1z" fill="#999" stroke="#777"/><path d="M6 9l3 8" stroke="#ccc" stroke-width="2"/></svg>
                            <h3>Crea...</h3>
                            <button type="button" aria-label="Minimize dialog"><svg viewBox="0 0 12 12"><path d="M0 5.5h12" stroke="#777"/></svg></button>
                            <button type="button" aria-label="Close dialog"><svg viewBox="0 0 12 12"><path d="M0 0l12 12M12 0L0 12" stroke="#777"/></svg></button>
                        </div>
                    </div>
                </div>
            </section>
        </main>

        <section class="output">
            <div class="output-head">
                <h2>MX Output Window</h2>
                <button type="button" aria-label="Output menu"><svg class="menu-caret"><use href="#caret"/></svg></button>
                <button type="button" aria-label="Pin output"><svg class="pin"><use href="#pin"/></svg></button>
            </div>
            <div class="output-box">
                <pre>IG</pre>
                <div class="vscroll">
                    <svg class="chev up"><use href="#chevron"/></svg>
                    <svg class="chev"><use href="#chevron"/></svg>
                </div>
                <div class="hscroll">
                    <svg viewBox="0 0 8 10"><path d="M7 0L2 5l5 5" fill="none" stroke="#bbb" stroke-width="2"/></svg>
                    <svg viewBox="0 0 8 10"><path d="M1 0l5 5-5 5" fill="none" stroke="#bbb" stroke-width="2"/></svg>
                </div>
            </div>
        </section>

        <div class="row convert-row">
            <div class="convert">
                <i class="grip"></i>
                <span class="auto">Autoconvert OFF</span>
                <svg class="lamp"><use href="#ball"/></svg>
                <svg class="lamp"><use href="#ball"/></svg>
                <svg class="lamp" viewBox="0 0 16 16"><circle cx="8" cy="8" r="7" fill="#d81408" stroke="#8a1a10" stroke-width="1.6"/><path d="M4 6l4-3v3l-3 2z" fill="#ffb0a0"/></svg>
                <span class="select flat project"><select aria-label="Style project"><option></option></select><svg viewBox="0 0 10 6"><path d="M0 0l5 5 5-5" fill="none" stroke="#444"/></svg></span>
                <i class="sep"></i>
                <span class="select flat styleset"><select aria-label="Style set"><option>No Associated Style Set</option></select><svg viewBox="0 0 10 6"><path d="M0 0l5 5 5-5" fill="none" stroke="#444"/></svg></span>
                <button class="tool mid" type="button" aria-label="Draw"><svg class="tall"><use href="#bolt"/></svg></button>
                <button class="tool mid" type="button" aria-label="Draw all"><svg class="tall" viewBox="0 0 24 20"><use href="#bolt" width="18" height="20"/><use href="#bolt" x="3" width="18" height="20"/><use href="#bolt" x="6" width="18" height="20"/></svg></button>
                <button class="tool mid" type="button" aria-label="Draw layers"><svg class="tall" viewBox="0 0 20 20"><path d="M4 0v7M1 3h7M1 1l6 5M7 1L1 6" stroke="#674"/><path d="M2 8l4-2h10l-3 3H3zM2 12l2 2h9M2 15l4 3h9" fill="#ddd" stroke="#222" stroke-width="1.3"/><path d="M9 11h10v8H9z" fill="#d89a20"/><path d="M14 13l3 3" stroke="#f8e8a0"/></svg></button>
            </div>
            <div class="bar cad">
                <i class="grip"></i>
                <span class="select mode focused"><select aria-label="Mode"><option>CAD</option></select><svg><use href="#caret"/></svg></span>
                <span class="select mode"><select aria-label="Key-ins"><option>MX Keyins</option></select><svg><use href="#caret"/></svg></span>
                <span class="select mode"><select aria-label="Pick"><option>Single Pick</option></select><svg><use href="#caret"/></svg></span>
                <span class="select mode"><select aria-label="Lock"><option>Unlocked</option></select><svg><use href="#caret"/></svg></span>
                <input type="checkbox" id="show-output" checked>
                <label for="show-output">MX Output Window</label>
                <svg class="info" viewBox="0 0 12 12"><circle cx="6" cy="6" r="6" fill="#0808d8"/><path d="M6 2v2M5 5.5h1.5V10M4 9.5h4" stroke="#fff" stroke-width="1.6" fill="none"/></svg>
                <output>-1179720.738, -983116.255</output>
            </div>
        </div>

        <div class="row snap-row">
            <div class="bar views">
                <i class="grip"></i>
                <button class="tool" type="button" aria-label="Back"><svg viewBox="0 0 16 16"><circle cx="8" cy="8" r="7" fill="#188c28"/><path d="M12 8H5M8 5L5 8l3 3" stroke="#fff" stroke-width="2" fill="none"/></svg></button>
                <button class="drop" type="button" aria-label="Back list"><svg><use href="#caret"/></svg></button>
                <button class="tool" type="button" aria-label="Forward"><svg viewBox="0 0 16 16"><circle cx="8" cy="8" r="7" fill="#a8a8a8"/><path d="M4 8h7M8 5l3 3-3 3" stroke="#e8e8e8" stroke-width="2" fill="none"/></svg></button>
                <button class="drop dim" type="button" aria-label="Forward list"><svg><use href="#caret"/></svg></button>
                <button class="tool" type="button" aria-label="Coordinate system"><svg viewBox="0 0 16 16"><path d="M4 11l7 4 4-2-6-3z" fill="#d8d8e8" stroke="#aab"/><path d="M5 1c2 3 2 6 2 9l5 2" fill="none" stroke="#88a" stroke-width="1.5"/><path d="M5 1l1 10-5 2" fill="none" stroke="#558"/></svg></button>
                <button class="drop" type="button" aria-label="Coordinate list"><svg><use href="#caret"/></svg></button>
                <span class="select group"><svg class="lead"><use href="#models"/></svg><select aria-label="View group"><option>Default</option></select><svg><use href="#caret"/></svg></span>
                <i class="sep"></i>
                <button class="tool" type="button" aria-label="Manage groups"><svg><use href="#models"/></svg></button>
                <i class="sep"></i>
                <div class="toggles">
                    <button class="on" type="button">1</button>
                    <button type="button">2</button>
                    <button type="button">3</button>
                    <button type="button">4</button>
                    <button type="button">5</button>
                    <button type="button">6</button>
                    <button type="button">7</button>
                    <button type="button">8</button>
                </div>
            </div>
            <div class="bar snaps">
                <i class="grip"></i>
                <button class="tool on" type="button" aria-label="AccuSnap"><svg viewBox="0 0 16 16"><path d="M8 2l6 3-4 5z" fill="#d09898"/><path d="M2 5l8 8M10 5l-8 8" stroke="#443" stroke-width="4"/><path d="M2 5l8 8M10 5l-8 8" stroke="#f8e820" stroke-width="2"/></svg></button>
                <i class="sep"></i>
                <button class="tool" type="button" aria-label="Near snap"><svg viewBox="0 0 16 16"><path d="M1 12h6c5 0 6-4 6-9" fill="none" stroke="#555" stroke-width="1.4"/><circle cx="7" cy="11" r="2" fill="#8ab4f8" stroke="#2c5cb8"/></svg></button>
                <button class="tool on dots" type="button" aria-label="Keypoint snap"><svg viewBox="0 0 16 16"><path d="M2 12h6c4 0 5-4 5-9" fill="none" stroke="#446" stroke-width="1.4"/><g fill="#8ab4f8" stroke="#2c5cb8"><circle cx="3" cy="12" r="1.5"/><circle cx="9" cy="12" r="1.5"/><circle cx="13" cy="4" r="1.5"/></g></svg></button>
                <button class="tool" type="button" aria-label="Midpoint snap"><svg viewBox="0 0 16 16"><path d="M2 14L14 2" stroke="#555" stroke-width="1.4"/><circle cx="8" cy="8" r="2" fill="#8ab4f8" stroke="#2c5cb8"/></svg></button>
                <button class="tool" type="button" aria-label="Center snap"><svg viewBox="0 0 16 16"><circle cx="8" cy="8" r="6" fill="#eee" stroke="#555" stroke-width="1.4"/><circle cx="8" cy="8" r="1.5" fill="#8ab4f8" stroke="#2c5cb8"/></svg></button>
                <button class="tool" type="button" aria-label="Origin snap"><svg viewBox="0 0 16 16"><path d="M8 1v14M1 8h14M4 4l8 8M12 4l-8 8" stroke="#444"/><circle cx="8" cy="8" r="2.5" fill="#5a94c8" stroke="#246"/></svg></button>
                <button class="tool" type="button" aria-label="Bisector snap"><svg viewBox="0 0 16 16"><path d="M2 14c1-5 4-4 6-6s3-2 3-5l3-1" fill="none" stroke="#555" stroke-width="1.4"/><circle cx="8" cy="8" r="2" fill="#8ab4f8" stroke="#2c5cb8"/></svg></button>
                <button class="tool" type="button" aria-label="Intersection snap"><svg viewBox="0 0 16 16"><path d="M2 2l12 12M14 4L2 13" stroke="#555" stroke-width="1.4"/><circle cx="8" cy="8" r="2" fill="#8ab4f8" stroke="#2c5cb8"/></svg></button>
                <button class="tool" type="button" aria-label="Tangent snap"><svg viewBox="0 0 16 16"><path d="M1 4h14M2 12c1-10 11-10 12 0" fill="none" stroke="#999" stroke-width="1.4"/></svg></button>
                <button class="tool" type="button" aria-label="Perpendicular snap"><svg viewBox="0 0 16 16"><path d="M1 13h14M11 2v11M8 10h3" fill="none" stroke="#999" stroke-width="1.4"/></svg></button>
                <button class="tool" type="button" aria-label="Multi snap"><svg viewBox="0 0 16 16"><path d="M3 3h10v10H3z" fill="#dcecff" stroke="#345" stroke-width="1.4"/><g fill="#fff" stroke="#2c70d0"><circle cx="3" cy="3" r="2"/><circle cx="13" cy="3" r="2"/><circle cx="3" cy="13" r="2"/><circle cx="13" cy="13" r="2"/><circle cx="8" cy="8" r="2"/></g></svg></button>
            </div>
        </div>

        <footer class="status">
            <p>&gt; Locate Elements - Reset To Complete</p>
            <i class="grip"></i>
            <div class="cell fill"></div>
            <div class="cell"><svg class="large" viewBox="0 0 28 26"><path d="M4 21h16c3-3 3-8 3-15" fill="none" stroke="#555" stroke-width="1.4"/><g fill="#dceaff" stroke="#3468c0" stroke-width="1.4"><circle cx="5" cy="20" r="3"/><circle cx="19" cy="19" r="3"/><circle cx="23" cy="5" r="3"/></g></svg></div>
            <div class="cell"><svg viewBox="0 0 16 16"><path d="M5 8V5c0-4 6-4 6 0v3" fill="none" stroke="#888" stroke-width="1.6"/><path d="M3 7h10v7H3z" fill="#a8b010" stroke="#666a10"/></svg></div>
            <div class="cell level-name">Default</div>
            <div class="cell message"></div>
            <div class="cell"></div>
            <div class="cell"></div>
            <div class="cell"></div>
            <div class="cell"><svg viewBox="0 0 16 16"><path d="M2 2h11l2 2-3 3 2 7H3l-2-2 3-3zM4 9l8-2M13 2l-1 5" fill="#e8e8e8" stroke="#999" stroke-width="1.3"/></svg></div>
            <div class="cell"><svg viewBox="0 0 16 16"><path d="M3 8h10v7H3z" fill="#eef" stroke="#99a"/><path d="M8 10h3v5H8z" fill="#3858b0"/><path d="M1 8l7-6 6 6" fill="none" stroke="#e89410" stroke-width="3.5"/><path d="M12 1h2v4h-2z" fill="#b07020"/></svg></div>
            <div class="cell"></div>
            <div class="cell"><svg viewBox="0 0 16 16"><path d="M2 2h13v9l-2 4-9-1z" fill="#ddd" stroke="#aaa"/><path d="M5 4h8v7H6zM7 6h4v4H7z" fill="none" stroke="#888" stroke-width="1.4"/></svg></div>
            <div class="cell"><svg viewBox="0 0 16 16"><path d="M0 0h16v16H0z" fill="#aaa"/><path d="M4 2h8v6l-2 3 4 2v3H2v-3l4-2-2-3z" fill="#ddd"/></svg></div>
        </footer>
    </div>
    </body>
</html>
```

FILE: styles.css
```css
* {
  box-sizing: border-box;
}

body {
  margin: 0;
  padding: 26px 1px;
  height: 100vh;
  background: #000;
  font: 14px/20px "Liberation Sans", Arial, sans-serif;
  color: #000;
}

button, select, input {
  font: inherit;
  color: inherit;
  margin: 0;
}

button {
  border: 0;
  padding: 0;
  background: none;
  display: flex;
  align-items: center;
  justify-content: center;
}

h1, h2, h3, p, pre {
  margin: 0;
  font-weight: normal;
}

h1, h2, h3, output, .auto {
  font-family: "Open Sans", "Noto Sans", sans-serif;
  white-space: nowrap;
}

a {
  color: inherit;
  text-decoration: none;
}

svg {
  flex: none;
}

.sprite {
  display: none;
}

.app {
  height: 100%;
  display: flex;
  flex-direction: column;
  background: #efefef;
}

/* title bar */
.titlebar {
  height: 28px;
  flex: none;
  display: flex;
  align-items: center;
  background: #fff;
  padding: 0 2px 1px 1px;
}

.logo {
  width: 22px;
  height: 22px;
}

.logo-text {
  font: 11px "Open Sans", sans-serif;
  fill: #5a4410;
}

.titlebar h1 {
  flex: 1;
  margin-left: 4px;
  font-size: 14px;
}

.winbuttons {
  display: flex;
}

.winbuttons button {
  width: 59px;
  height: 26px;
}

.winbuttons svg {
  width: 12px;
  height: 12px;
}

/* toolbars */
.row {
  flex: none;
  display: flex;
  align-items: flex-start;
}

.bar {
  display: flex;
  align-items: center;
  background: linear-gradient(#fbfbfb, #ebebeb 45%, #d8d8d8 60%, #d4d4d4);
  border-bottom: 1px solid #bccac6;
  border-right: 1px solid #c8d0ce;
  border-radius: 0 0 4px 0;
}

.grip {
  flex: none;
  width: 2px;
  height: 16px;
  margin: 0 3px;
  background: repeating-linear-gradient(#999 0 2px, transparent 2px 4px);
}

.sep {
  flex: none;
  width: 1px;
  height: 20px;
  margin: 0 3px;
  background: #999;
}

.tool {
  flex: none;
  width: 20px;
  height: 20px;
}

.tool svg {
  width: 16px;
  height: 16px;
}

.drop {
  flex: none;
  width: 19px;
  height: 20px;
}

.drop svg, .select svg, .arrow {
  width: 10px;
  height: 6px;
}

.dim {
  color: #777;
}

.tool.mid {
  width: 23px;
}

.tool.mid .tall {
  width: 20px;
  height: 20px;
}

/* drop-downs: the arrow shares the cell of the select */
.select {
  display: grid;
  align-items: center;
  background: #d5d5d5;
  border: 1px solid #a4a4a4;
}

.select > * {
  grid-area: 1 / 1;
}

.select select {
  appearance: none;
  width: 100%;
  height: 100%;
  border: 0;
  padding: 0 0 0 2px;
  background: none;
}

.select svg {
  justify-self: end;
  margin-right: 6px;
  pointer-events: none;
}

/* menu */
.menu-row {
  height: 29px;
  gap: 3px;
}

.menu {
  height: 26px;
  margin-top: 3px;
  gap: 17px;
  padding-right: 13px;
}

.menu .grip {
  margin-right: -3px;
}

.filebar {
  height: 26px;
}

/* attributes and key-in */
.tools-row {
  height: 32px;
}

.attributes {
  height: 32px;
  width: 453px;
}

.attributes .drop.wide {
  width: 24px;
}

.level {
  width: 168px;
  height: 26px;
}

.attributes .sep {
  height: 26px;
}

.attr {
  width: 67px;
  justify-content: space-between;
  padding: 0 3px 0 1px;
}

.attr .ico {
  width: 16px;
  height: 16px;
}

.keyin {
  display: flex;
  align-items: center;
  height: 28px;
  width: 443px;
  padding-left: 1px;
}

.keyin .grip {
  margin-right: 2px;
}

.keyin-box {
  width: 248px;
  height: 20px;
  margin-right: 1px;
  background: #fff;
  border: 2px solid #888;
  border-right-color: #bbb;
  border-bottom-color: #bbb;
}

.keyin-box svg {
  margin-right: 4px;
}

.keyin .sep {
  margin: 0 4px;
}

.primary {
  height: 27px;
}

/* feature definition */
.feature-row {
  height: 32px;
  border-bottom: 1px solid #333;
}

.feature {
  height: 32px;
}

.feature .grip {
  margin-right: 2px;
}

.combo {
  height: 28px;
  font-size: 13px;
  background: linear-gradient(to left, #d8d8d8 22px, #fff 22px);
  border: 1px solid #777;
}

.combo.long {
  width: 400px;
}

.combo.longer {
  width: 428px;
}

.tool.low {
  height: 22px;
  align-items: flex-end;
}

.tool.low svg {
  width: 12px;
  height: 12px;
}

.tool.big {
  width: 26px;
}

.tool.big svg {
  width: 24px;
  height: 24px;
}

/* main area */
.main {
  flex: 1;
  min-height: 0;
  display: flex;
}

.tasks {
  flex: none;
  width: 344px;
  border-right: 6px solid #b3acd0;
  font: 13px/16px "DejaVu Sans", Verdana, sans-serif;
}

.dock-head {
  display: flex;
  align-items: center;
  height: 20px;
  padding: 1px 2px 0 4px;
  margin-bottom: 9px;
  background: linear-gradient(#a9c4e4, #b4d0ea 40%, #b9e6ee 55%);
}

.dock-head h2 {
  flex: 1;
  font-size: 14px;
}

.dock-head button {
  width: 21px;
}

.menu-caret {
  width: 15px;
  height: 8px;
}

.pin {
  width: 8px;
  height: 12px;
}

.close {
  width: 15px;
  height: 15px;
}

.tab-row {
  display: flex;
  height: 25px;
  border-bottom: 1px solid #666;
}

.tab-row + .tab-row {
  margin-top: -9px;
}

.tab {
  display: flex;
  flex: none;
  width: 298px;
  height: 25px;
  padding: 2px 0 0 5px;
  background: #efefef;
  border: 1px solid #666;
  border-bottom: 0;
  border-radius: 4px 4px 0 0;
  z-index: 1;
}

.tab.first {
  margin-left: 5px;
}

.tab.second {
  margin-left: 21px;
}

.tab.third {
  margin-left: 37px;
  height: 24px;
  align-items: center;
  padding: 0 0 1px 2px;
  background: #fff;
}

.tab span {
  width: 24px;
  height: 16px;
  margin: -2px 0 0 auto;
  padding-left: 7px;
  border-left: 1px solid #666;
}

.tab span svg {
  width: 8px;
  height: 5px;
}

.tab.third svg {
  width: 16px;
  height: 16px;
  margin-right: 5px;
}

.main-tasks {
  display: flex;
  height: 36px;
  margin: 5px 3px 4px 4px;
  padding: 4px 3px 0;
  background: #fff;
  border-radius: 4px;
}

.main-tasks button {
  display: grid;
  width: 28px;
  height: 30px;
}

.main-tasks button > * {
  grid-area: 1 / 1;
}

.main-tasks svg {
  width: 24px;
  height: 24px;
  align-self: start;
  justify-self: end;
}

.main-tasks b {
  align-self: end;
  width: 15px;
  margin-bottom: 2px;
  justify-self: start;
  line-height: 13px;
  font-weight: normal;
  background: linear-gradient(to right, #b4d4f8, #6ca8e8);
  opacity: 0.9;
}

/* small mark for buttons that open a tool box */
.main-tasks .more::after {
  content: "";
  grid-area: 1 / 1;
  align-self: end;
  justify-self: end;
  margin-bottom: 1px;
  border: 3px solid transparent;
  border-left-color: #000;
  border-right: 0;
}

.sections {
  display: flex;
  flex-direction: column;
  gap: 4px;
  padding: 0 1px 0 3px;
}

.section {
  justify-content: flex-start;
  height: 24px;
  padding: 0 9px 0 3px;
  border: 1px solid #aab0b0;
  border-radius: 5px;
  background: linear-gradient(#f0f0f0, #e4e4e4 45%, #d6d6d6 55%, #d8d8d8);
}

.section span {
  flex: 1;
  padding-top: 2px;
  text-align: left;
}

.section > svg {
  width: 16px;
  height: 16px;
  margin-right: 7px;
}

.section .chev, .vscroll .chev {
  width: 10px;
  height: 8px;
  margin: 0;
  color: #333c3a;
}

.up {
  transform: scaleY(-1);
}

.section.open {
  display: flex;
  align-items: center;
  border-color: transparent;
  background: linear-gradient(#efefef 40%, #b8e4f0 45%, #a8ccf2);
  font-weight: bold;
}

.section.open button {
  width: 17px;
  height: 17px;
  margin-right: 1px;
}

.section.open button svg {
  width: 14px;
  height: 14px;
}

.section.open .on {
  background: #fff;
  border: 1px solid #aaa;
}

.section.open .chev {
  margin-left: 4px;
}

.toolgrid {
  margin: -4px 1px 1px 3px;
  padding: 1px 6px 3px 3px;
  background: #fff;
}

.toolline {
  display: flex;
  align-items: center;
  height: 30px;
  border-bottom: 1px solid #999;
}

.toolline:last-child {
  border-bottom: 0;
}

.toolline kbd {
  width: 15px;
  height: 30px;
  margin-right: 1px;
  font: 13px/28px "DejaVu Sans", Verdana, sans-serif;
  text-align: center;
  background: linear-gradient(to right, #c0dcf8, #74b0ec);
}

.toolline button {
  width: 28px;
  height: 28px;
}

.toolline svg {
  width: 24px;
  height: 24px;
}

.toolline .on {
  background: #f6d070;
  border: 1px solid #345a8a;
}

.mini {
  font: bold 7px "Open Sans", sans-serif;
  fill: #6a4a08;
}

/* view window */
.view {
  flex: 1;
  min-width: 0;
  display: flex;
  flex-direction: column;
}

.view-head {
  flex: none;
  display: flex;
  align-items: center;
  height: 37px;
  padding: 4px 0 0 3px;
  gap: 3px;
  background: linear-gradient(#93a8dc 48%, #9bc4e9 52%, #a2c6ec);
  border-top: 2px solid #a8a8cc;
}

.view-icon {
  width: 18px;
  height: 18px;
}

.view-head h2 {
  flex: 1;
  margin-left: 6px;
  font-size: 14px;
}

.view-head button {
  width: 41px;
  height: 24px;
  border: 1px solid #48688c;
  border-radius: 3px;
  background: linear-gradient(#b8ccec 45%, #94aadc 50%);
}

.view-head button svg {
  width: 24px;
  height: 20px;
}

.view-head .view-close {
  background: linear-gradient(#e89a88 45%, #b4482c 50%, #d0705a);
  border-color: #3c1818;
}

.view-tools {
  flex: none;
  display: flex;
  align-items: center;
  height: 22px;
}

.canvas {
  flex: 1;
  position: relative;
  overflow: hidden;
  background: #000;
}

.drawing {
  display: block;
  width: 100%;
  height: 100%;
}

.prompt {
  position: absolute;
  left: 134px;
  top: 356px;
  width: 236px;
  padding-left: 2px;
  font-size: 13px;
  line-height: 17px;
  background: #a9a9a9;
  border: 1px solid #55503c;
}

.dialog {
  position: absolute;
  right: 200px;
  top: 18px;
  width: 245px;
  height: 129px;
  background: #efefef;
}

.dialog-head {
  display: flex;
  align-items: center;
  height: 32px;
  padding: 0 1px 1px 5px;
  background: #fff;
  color: #777;
}

.wrench {
  width: 16px;
  height: 20px;
}

.dialog h3 {
  font-size: 14px;
  margin: 0 auto 0 7px;
}

.dialog button {
  width: 60px;
}

.dialog button:first-of-type {
  margin-right: 57px;
}

.dialog button svg {
  width: 12px;
  height: 12px;
}

/* output window */
.output {
  flex: none;
  border-top: 5px solid #b3acd0;
}

.output-head {
  display: flex;
  align-items: center;
  height: 17px;
  margin-bottom: 9px;
  padding: 4px 2px 0 4px;
  background: linear-gradient(#bfc6e6 48%, #b9e5ee 52%);
}

.output-head h2 {
  flex: 1;
  font-size: 15px;
}

.output-head button {
  width: 22px;
}

.output-head button:last-child {
  width: 17px;
}

.output-box {
  display: grid;
  grid-template-columns: 1fr 22px;
  grid-template-rows: 38px 20px;
  height: 61px;
  border: 1px solid #777;
  border-right: 0;
  border-bottom: 2px solid #888;
}

.output-box pre {
  padding-left: 7px;
  font: 13px/17px "DejaVu Sans Mono", monospace;
}

.vscroll {
  display: flex;
  flex-direction: column;
  align-items: center;
  justify-content: space-between;
  padding: 6px 0;
  border-left: 1px solid #fff;
}

.vscroll .chev {
  width: 8px;
  height: 6px;
}

.hscroll {
  display: flex;
  justify-content: space-between;
  align-items: center;
  padding: 0 6px 0 8px;
}

.hscroll svg {
  width: 8px;
  height: 10px;
}

/* convert toolbar */
.convert-row {
  height: 35px;
  padding-top: 4px;
}

.convert {
  display: flex;
  align-items: center;
  height: 25px;
  width: 927px;
}

.convert .grip {
  margin-right: 1px;
}

.convert .sep {
  margin: 0 5px 0 6px;
}

.auto {
  width: 118px;
  height: 19px;
  line-height: 16px;
  padding-left: 1px;
  border-top: 1px solid #aaa;
  border-left: 1px solid #aaa;
}

.lamp {
  width: 18px;
  height: 18px;
  margin-left: 2px;
}

.flat {
  height: 22px;
  font-size: 13px;
  background: #fff;
  border-color: #777;
}

.project {
  width: 311px;
  margin-left: 4px;
}

.styleset {
  width: 341px;
  margin-right: 4px;
}

.flat svg {
  margin-right: 4px;
}

.cad {
  flex: none;
  width: 938px;
  height: 29px;
  gap: 2px;
  padding-bottom: 3px;
}

.cad .grip {
  margin: 0 0 0 2px;
}

.mode {
  width: 117px;
  height: 20px;
}

.mode select {
  padding-left: 4px;
}

.mode.focused {
  outline: 1px dotted #000;
  outline-offset: 1px;
}

.cad input {
  appearance: none;
  width: 19px;
  height: 19px;
  margin: 0 4px 0 1px;
  border: 1px solid #222;
  background: #fff;
  display: grid;
  place-items: center;
}

.cad input:checked::before {
  content: "";
  width: 12px;
  height: 6px;
  border: solid #333;
  border-width: 0 0 2px 2px;
  transform: rotate(-45deg);
}

.info {
  width: 12px;
  height: 12px;
  margin: 5px 0 0 8px;
}

.cad output {
  margin-top: 5px;
}

/* view groups and snaps */
.snap-row {
  height: 31px;
  gap: 6px;
  border-bottom: 1px solid #999;
}

.views {
  height: 30px;
  padding-top: 1px;
}

.group {
  width: 168px;
  height: 26px;
  margin-left: 2px;
}

.group .lead {
  justify-self: start;
  width: 16px;
  height: 16px;
  margin-left: 2px;
}

.group select {
  padding-left: 22px;
}

.views .sep {
  height: 26px;
  margin: 0 2px 0 3px;
}

.toggles {
  display: flex;
}

.toggles button {
  width: 18px;
  height: 25px;
  border-right: 2px solid #222;
  border-left: 1px solid #fff;
  background: #e6e6e6;
}

.toggles button:last-child {
  border-right-color: #bbb;
}

.toggles .on {
  background: linear-gradient(#e8c89c 40%, #f8e078);
}

.snaps {
  height: 30px;
  padding: 1px 2px 0 0;
}

.snaps .tool.on {
  border: 1px solid #345a8a;
  background: linear-gradient(to right, #f4c070, #f8dc80);
}

.snaps .tool.dots {
  background: repeating-conic-gradient(#a06030 0 25%, #f8c878 0 50%) 0 0 / 4px 4px;
}

/* status bar */
.status {
  flex: none;
  display: flex;
  align-items: flex-end;
  height: 33px;
}

.status p {
  width: 390px;
  padding-left: 8px;
  line-height: 30px;
}

.status > .grip {
  height: 28px;
  margin-right: 5px;
}

.cell {
  flex: none;
  display: flex;
  align-items: center;
  justify-content: center;
  width: 34px;
  height: 31px;
  margin-right: 2px;
  border-top: 1px solid #999;
  border-left: 1px solid #999;
}

.cell:last-child {
  margin-right: 0;
}

.cell svg {
  width: 16px;
  height: 16px;
}

.cell .large {
  width: 28px;
  height: 26px;
}

.cell.fill {
  flex: 1;
}

.cell.level-name {
  width: 148px;
  justify-content: flex-start;
  padding-left: 2px;
}

.cell.message {
  width: 133px;
}
```
